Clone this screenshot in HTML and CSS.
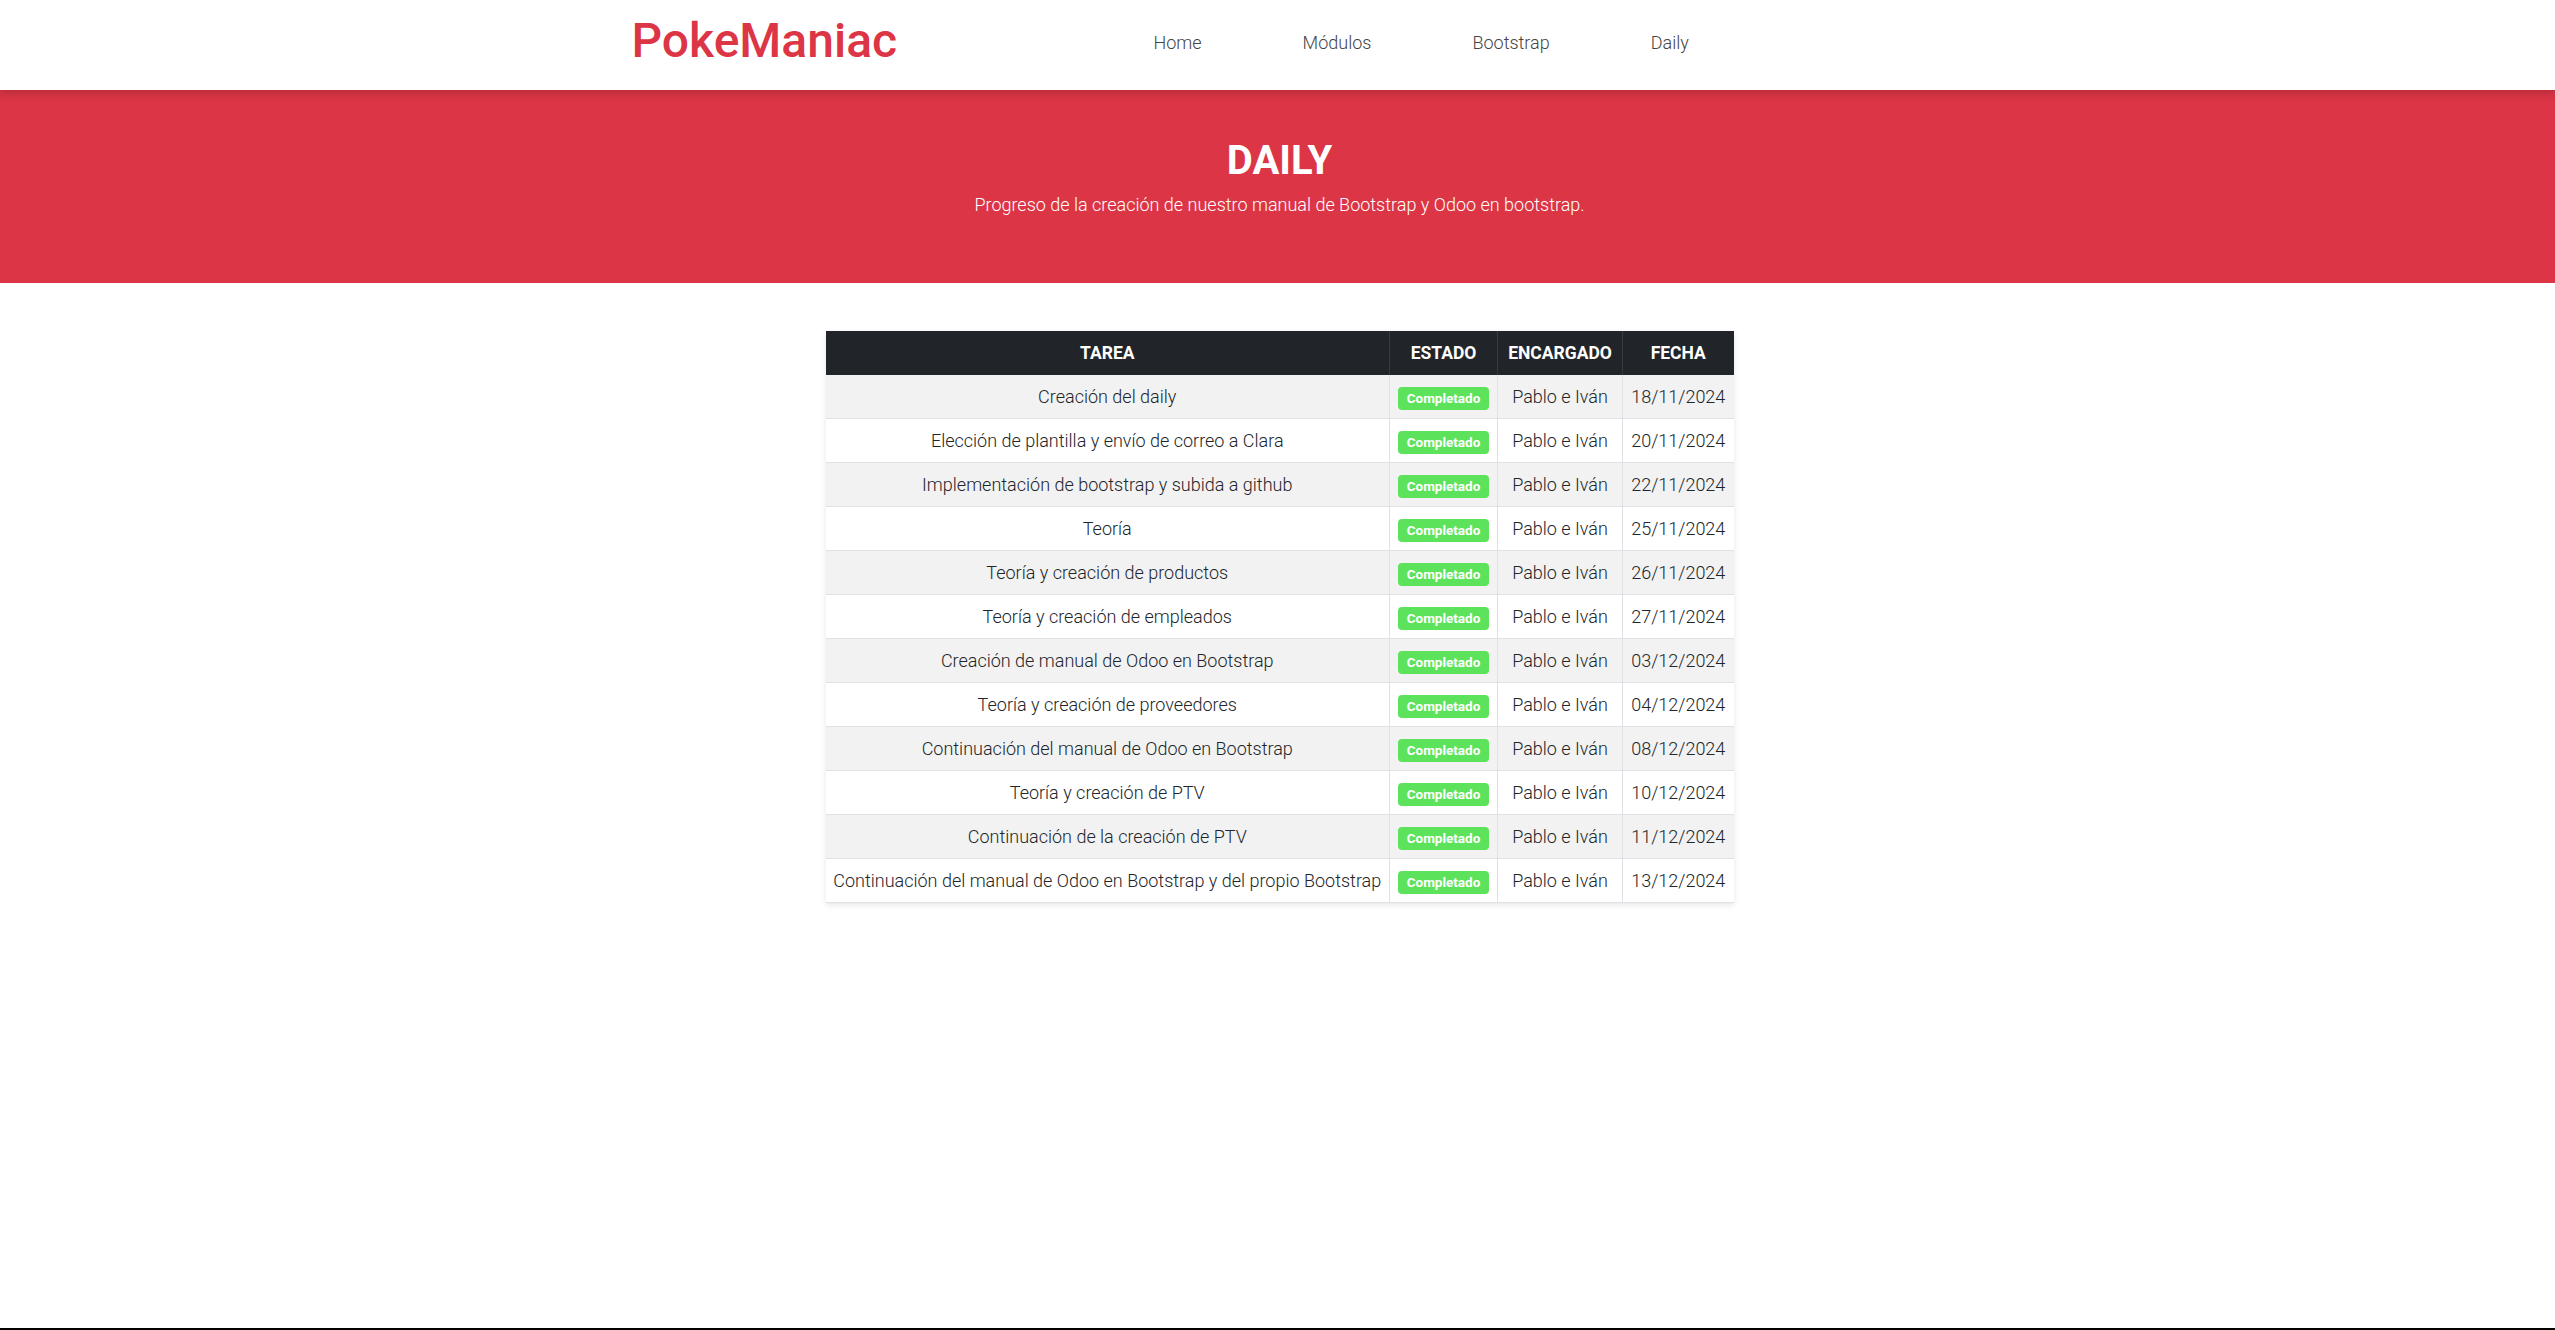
FILE: index.html
```html
<!DOCTYPE html>
<html lang="es">
<head>
<meta charset="utf-8">
<title>PokeManiac - Daily</title>
<link rel="stylesheet" href="styles.css">
</head>
<body>
<div class="page">
  <header class="navbar">
    <div class="container nav-inner">
      <a class="brand" href="#">PokeManiac</a>
      <ul class="nav-links">
        <li><a href="#">Home</a></li>
        <li><a href="#">Módulos</a></li>
        <li><a href="#">Bootstrap</a></li>
        <li><a href="#">Daily</a></li>
      </ul>
    </div>
  </header>

  <section class="hero">
    <h1 class="hero-title">DAILY</h1>
    <p class="hero-sub">Progreso de la creación de nuestro manual de Bootstrap y Odoo en bootstrap.</p>
  </section>

  <main class="content">
    <table class="daily-table">
      <colgroup>
        <col class="c-tarea">
        <col class="c-estado">
        <col class="c-enc">
        <col class="c-fecha">
      </colgroup>
      <thead>
        <tr><th>TAREA</th><th>ESTADO</th><th>ENCARGADO</th><th>FECHA</th></tr>
      </thead>
      <tbody>
        <tr><td>Creación del daily</td><td><span class="badge">Completado</span></td><td>Pablo e Iván</td><td>18/11/2024</td></tr>
        <tr><td>Elección de plantilla y envío de correo a Clara</td><td><span class="badge">Completado</span></td><td>Pablo e Iván</td><td>20/11/2024</td></tr>
        <tr><td>Implementación de bootstrap y subida a github</td><td><span class="badge">Completado</span></td><td>Pablo e Iván</td><td>22/11/2024</td></tr>
        <tr><td>Teoría</td><td><span class="badge">Completado</span></td><td>Pablo e Iván</td><td>25/11/2024</td></tr>
        <tr><td>Teoría y creación de productos</td><td><span class="badge">Completado</span></td><td>Pablo e Iván</td><td>26/11/2024</td></tr>
        <tr><td>Teoría y creación de empleados</td><td><span class="badge">Completado</span></td><td>Pablo e Iván</td><td>27/11/2024</td></tr>
        <tr><td>Creación de manual de Odoo en Bootstrap</td><td><span class="badge">Completado</span></td><td>Pablo e Iván</td><td>03/12/2024</td></tr>
        <tr><td>Teoría y creación de proveedores</td><td><span class="badge">Completado</span></td><td>Pablo e Iván</td><td>04/12/2024</td></tr>
        <tr><td>Continuación del manual de Odoo en Bootstrap</td><td><span class="badge">Completado</span></td><td>Pablo e Iván</td><td>08/12/2024</td></tr>
        <tr><td>Teoría y creación de PTV</td><td><span class="badge">Completado</span></td><td>Pablo e Iván</td><td>10/12/2024</td></tr>
        <tr><td>Continuación de la creación de PTV</td><td><span class="badge">Completado</span></td><td>Pablo e Iván</td><td>11/12/2024</td></tr>
        <tr><td>Continuación del manual de Odoo en Bootstrap y del propio Bootstrap</td><td><span class="badge">Completado</span></td><td>Pablo e Iván</td><td>13/12/2024</td></tr>
      </tbody>
    </table>
  </main>
</div>
</body>
</html>
```

FILE: styles.css
```css
html, body {
  margin: 0;
  padding: 0;
}

body {
  font-family: Roboto, "Liberation Sans", Arial, sans-serif;
  font-weight: 300;
  font-size: 18px;
  line-height: 1.5;
  color: #212529;
  background: #fff;
}

.page {
  min-height: 100vh;
  box-sizing: border-box;
  border-bottom: 2px solid #000;
  display: flex;
  flex-direction: column;
}

.container {
  width: 1320px;
  margin: 0 auto;
  padding: 0 12px;
  box-sizing: border-box;
}

.navbar {
  height: 90px;
  background: #fff;
  position: relative;
  z-index: 2;
  box-shadow: 0 2px 10px rgba(0, 0, 0, 0.22);
  padding-left: 4px;
}

.nav-inner {
  display: flex;
  align-items: center;
  height: 100%;
}

.brand {
  display: block;
  width: 472px;
  font-size: 48px;
  font-weight: 500;
  color: #dc3545;
  text-decoration: none;
  line-height: 1.2;
  margin-top: -8px;
}

.nav-links {
  list-style: none;
  display: flex;
  margin: 0;
  padding: 0;
  margin-top: -6px;
}

.nav-links a {
  display: block;
  padding: 0 50.5px;
  color: #444;
  text-decoration: none;
  font-size: 18px;
  font-weight: 300;
}

.nav-links li:first-child a {
  padding-left: 50px;
}

.hero {
  background: #dc3545;
  color: #fff;
  text-align: center;
  height: 193px;
  box-sizing: border-box;
  padding-top: 47px;
  padding-left: 4px;
}

.hero-title {
  margin: 0 0 6px;
  font-size: 40px;
  font-weight: 700;
  line-height: 1.2;
}

.hero-sub {
  margin: 0;
  font-size: 18px;
  font-weight: 300;
}

.content {
  padding-top: 48px;
  padding-left: 4px;
  flex: 1;
}

.daily-table {
  margin: 0 auto;
  width: 908px;
  border-collapse: collapse;
  table-layout: fixed;
  box-shadow: 0 2px 6px rgba(0, 0, 0, 0.1);
  text-align: center;
}

.c-tarea { width: 564px; }
.c-estado { width: 108px; }
.c-enc { width: 125px; }
.c-fecha { width: 111px; }

.daily-table th {
  background: #212529;
  color: #fff;
  font-weight: 700;
  font-size: 17.5px;
  height: 44px;
  padding: 0 6px;
  border-left: 1px solid #373b3e;
  white-space: nowrap;
}

.daily-table th:first-child {
  border-left: none;
}

.daily-table td {
  height: 43px;
  padding: 0 6px;
  border-top: 1px solid #dee2e6;
  border-left: 1px solid #dee2e6;
  white-space: nowrap;
  color: #212529;
}

.daily-table td:first-child {
  border-left: none;
}

.daily-table tbody tr:first-child td {
  border-top: none;
}

.daily-table tbody tr:nth-child(odd) td {
  background: #f2f2f2;
}

.daily-table tbody tr:last-child td {
  border-bottom: 1px solid #dee2e6;
}

.badge {
  display: inline-block;
  background: #5de35b;
  color: #fff;
  font-weight: 700;
  font-size: 13.5px;
  line-height: 1;
  padding: 5px 9px;
  border-radius: 4px;
  vertical-align: middle;
}
```
